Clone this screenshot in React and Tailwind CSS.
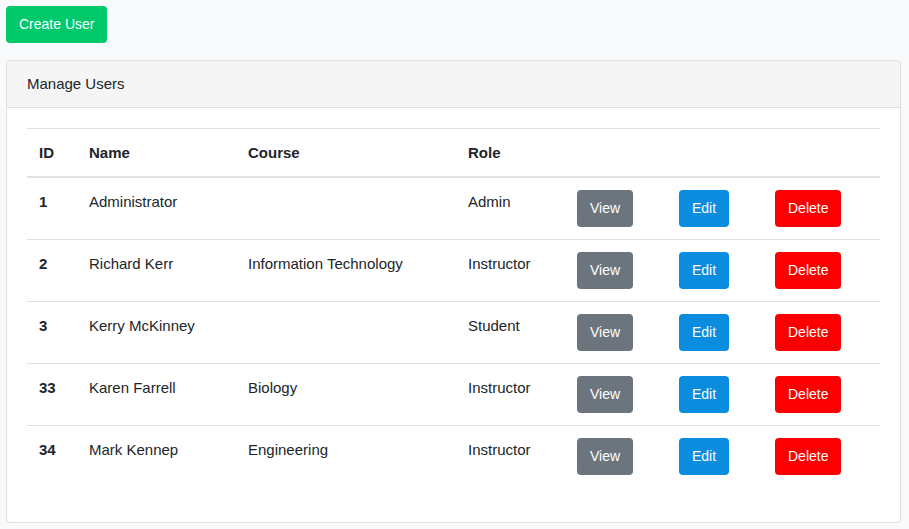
const users = [
  { id: 1, name: 'Administrator', course: '', role: 'Admin' },
  { id: 2, name: 'Richard Kerr', course: 'Information Technology', role: 'Instructor' },
  { id: 3, name: 'Kerry McKinney', course: '', role: 'Student' },
  { id: 33, name: 'Karen Farrell', course: 'Biology', role: 'Instructor' },
  { id: 34, name: 'Mark Kennep', course: 'Engineering', role: 'Instructor' },
];

const btn = 'inline-block rounded-[4px] px-[13px] py-2 text-[14px] leading-[21px] text-white';
const th = 'px-3 pt-3 pb-[11px] font-bold';

export default function App() {
  return (
    <div
      className="min-h-[529px] bg-[#f8f9fa] pt-[6px] pl-[6px] pr-[8px] text-[15px] leading-[24px] text-[#212529]"
      style={{ fontFamily: '"Liberation Sans", Arial, sans-serif' }}
    >
      <button className={`${btn} bg-[#00c96b]`}>Create User</button>

      <div className="mt-[17px] rounded-[4px] border border-[#dfdfdf] bg-white">
        <div className="border-b border-[#dfdfdf] bg-[#f5f5f5] px-5 py-[11px] rounded-t-[4px]">
          Manage Users
        </div>
        <div className="px-5 pt-5 pb-5">
          <table className="mb-[15px] w-full table-fixed border-collapse text-left">
            <colgroup>
              <col className="w-[50px]" />
              <col className="w-[159px]" />
              <col className="w-[220px]" />
              <col className="w-[109px]" />
              <col className="w-[102px]" />
              <col className="w-[96px]" />
              <col className="w-[117px]" />
            </colgroup>
            <thead>
              <tr className="border-t border-b-2 border-[#dee2e6]">
                <th className={th}>ID</th>
                <th className={th}>Name</th>
                <th className={th}>Course</th>
                <th className={th}>Role</th>
                <th className={th}></th>
                <th className={th}></th>
                <th className={th}></th>
              </tr>
            </thead>
            <tbody>
              {users.map((u, i) => (
                <tr key={u.id} className={i > 0 ? 'border-t border-[#dee2e6]' : ''}>
                  <td className="p-3 align-top font-bold">{u.id}</td>
                  <td className="p-3 align-top">{u.name}</td>
                  <td className="p-3 align-top">{u.course}</td>
                  <td className="p-3 align-top">{u.role}</td>
                  <td className="p-3 align-top">
                    <button className={`${btn} bg-[#6c757d]`}>View</button>
                  </td>
                  <td className="p-3 align-top">
                    <button className={`${btn} bg-[#0b8ddf]`}>Edit</button>
                  </td>
                  <td className="p-3 align-top">
                    <button className={`${btn} bg-[#fa0000]`}>Delete</button>
                  </td>
                </tr>
              ))}
            </tbody>
          </table>
        </div>
      </div>
    </div>
  );
}
